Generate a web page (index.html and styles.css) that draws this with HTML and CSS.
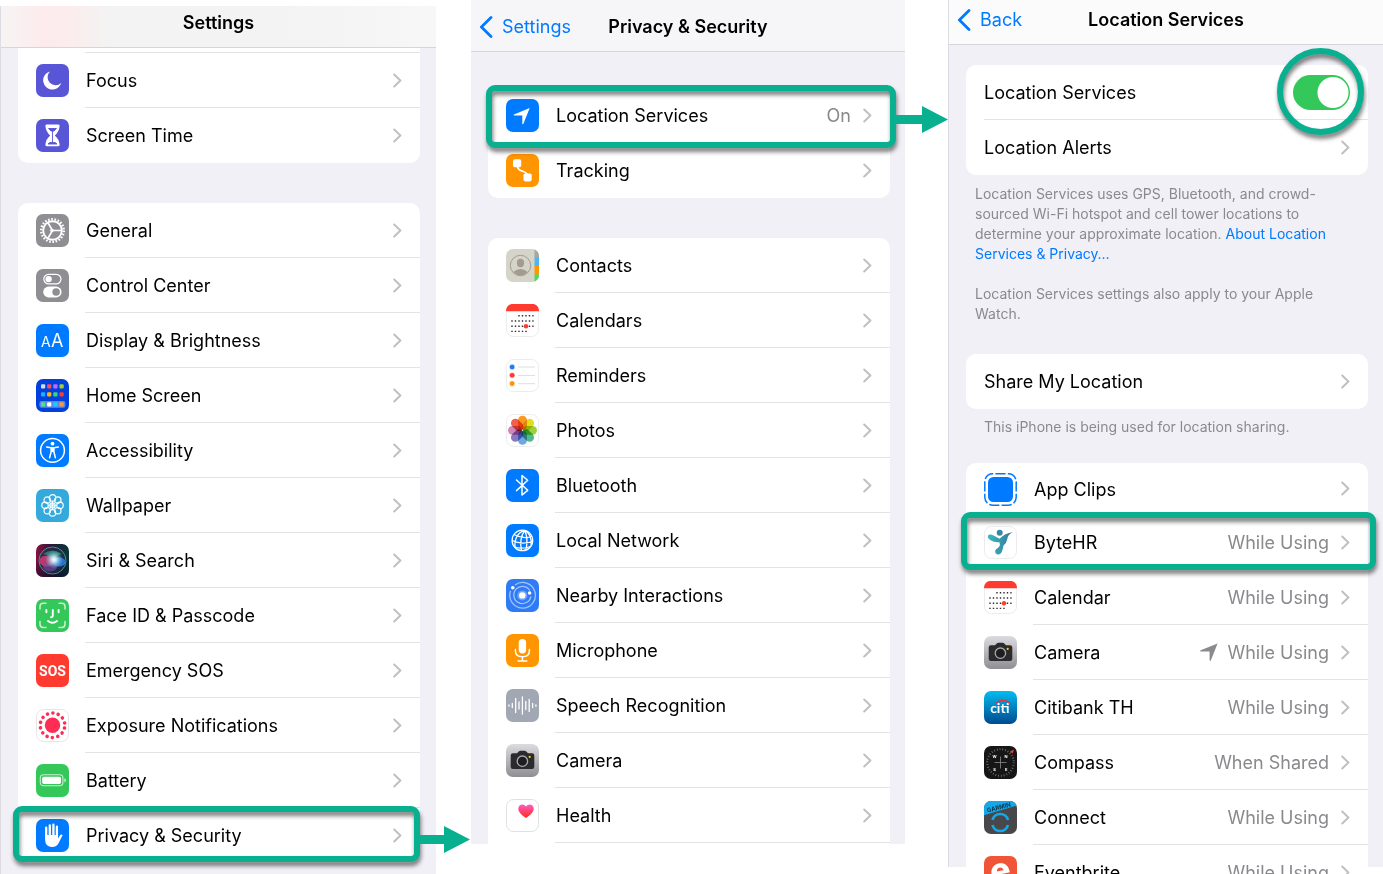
FILE: index.html
```html
<!DOCTYPE html>
<html lang="en">
<head>
<meta charset="utf-8">
<meta name="viewport" content="width=device-width, initial-scale=1">
<title>Location Services settings</title>
<link rel="stylesheet" href="styles.css">
</head>
<body>
<svg class="defs" aria-hidden="true">
  <defs>
    <linearGradient id="g-cam" x1="0" y1="0" x2="0" y2="1"><stop offset="0" stop-color="#dcdce0"/><stop offset="1" stop-color="#8e8e93"/></linearGradient>
    <linearGradient id="g-heart" x1="0" y1="0" x2="0" y2="1"><stop offset="0" stop-color="#ff5fc0"/><stop offset="1" stop-color="#ff2a1c"/></linearGradient>
    <linearGradient id="g-citi" x1="0" y1="0" x2="0" y2="1"><stop offset="0" stop-color="#00bdf2"/><stop offset="1" stop-color="#004a8f"/></linearGradient>
    <linearGradient id="g-siri" x1="0" y1="0" x2="1" y2="0"><stop offset="0" stop-color="#8a1140"/><stop offset=".45" stop-color="#2a1838"/><stop offset="1" stop-color="#06383a"/></linearGradient>
    <linearGradient id="g-siri2" x1="0" y1="0" x2="0" y2="1"><stop offset=".4" stop-color="#0a0c1c" stop-opacity="0"/><stop offset="1" stop-color="#0a0c2c" stop-opacity=".6"/></linearGradient>
    <radialGradient id="g-glow"><stop offset="0" stop-color="#fff"/><stop offset=".3" stop-color="#d8f4ff" stop-opacity=".85"/><stop offset="1" stop-color="#6fd0e0" stop-opacity="0"/></radialGradient>
    <linearGradient id="g-byte" x1="0" y1="0" x2="1" y2="0"><stop offset="0" stop-color="#35bcc0"/><stop offset="1" stop-color="#3b7498"/></linearGradient>
    <clipPath id="tile"><rect width="33" height="33" rx="7"/></clipPath>
  </defs>
  <symbol id="chevron" viewBox="0 0 9 15"><path d="M1.2 1.5 7.4 7.5 1.2 13.5" fill="none" stroke="#c0c0c3" stroke-width="2" stroke-linecap="round" stroke-linejoin="round"/></symbol>
  <symbol id="back" viewBox="0 0 14 22"><path d="M12 1.6 2.4 11 12 20.4" fill="none" stroke="#007aff" stroke-width="2.8" stroke-linecap="round" stroke-linejoin="round"/></symbol>
  <symbol id="arrow" viewBox="0 0 52 27"><path d="M0 9H26V0L52 13.5 26 27V18H0Z" fill="#08b090"/></symbol>
  <symbol id="calendar" viewBox="0 0 33 33">
    <rect x=".5" y=".5" width="32" height="32" rx="7" fill="#fff" stroke="#ececee"/>
    <path d="M0 7.3C0 2.6 2.6 0 7 0H26C30.4 0 33 2.6 33 7.3Z" fill="#ff3b30"/>
    <g stroke="#2c2c2e" stroke-width="1.4" stroke-dasharray="1.4 2.1"><path d="M12.3 11.8H27.6M5.3 17H27.6M5.3 22.2H27.6M5.3 27.4H21"/></g>
    <circle cx="20" cy="22.2" r="2.2" fill="#ff3b30"/>
  </symbol>
  <symbol id="camera" viewBox="0 0 33 33">
    <rect width="33" height="33" rx="7" fill="url(#g-cam)"/>
    <path d="M7 9.2H11L13 7.2Q13.6 6.7 14.3 6.7H18.7Q19.4 6.7 20 7.2L22 9.2H26Q28.3 9.2 28.3 11.5V22.8Q28.3 25.1 26 25.1H7Q4.7 25.1 4.7 22.8V11.5Q4.7 9.2 7 9.2Z" fill="#2b2b2d"/>
    <circle cx="16.4" cy="17.2" r="5.2" fill="#1e1e20" stroke="#aaaaae" stroke-width="1.3"/>
    <circle cx="23.7" cy="12.9" r="1.1" fill="#ffcc00"/>
  </symbol>
  <symbol id="location" viewBox="0 0 20 20"><path d="M18.6 1.4 11.8 18.4Q11.1 19.6 10.6 18.2V9.4H1.8Q.4 8.9 1.6 8.2Z"/></symbol>
</svg>

<main class="screens">
  <section class="screen screen-settings" aria-label="Settings">
    <header class="bar bar-settings"><h1>Settings</h1></header>
    <ul class="card card-cut">
      <li><a class="row row-cut" href="#focus">
        <svg class="icon" viewBox="0 0 33 33"><rect width="33" height="33" rx="7" fill="#5856d6"/><path d="M14 7.4A9.2 9.2 0 1 0 25.2 18.9 7.8 7.8 0 0 1 14 7.4Z" fill="#fff"/></svg>
        <span class="cell"><span class="label">Focus</span><svg class="chev"><use href="#chevron"/></svg></span></a></li>
      <li><a class="row" href="#screen-time">
        <svg class="icon" viewBox="0 0 33 33"><rect width="33" height="33" rx="7" fill="#5856d6"/><path d="M10.5 5.5H22.5Q23.8 5.5 23.6 7 23 13 18.8 16.5 23 20 23.6 25.5 23.8 27.3 22.5 27.3H10.5Q9.2 27.3 9.4 25.5 10 20 14.2 16.5 10 13 9.4 7 9.2 5.5 10.5 5.5Z" fill="#fff"/><path d="M12.5 9.5H20.5L18 12H15ZM16.5 12V23.5M12 25H21L19 23.5H14Z" fill="#5856d6" stroke="#5856d6" stroke-width=".9"/></svg>
        <span class="cell"><span class="label">Screen Time</span><svg class="chev"><use href="#chevron"/></svg></span></a></li>
    </ul>
    <ul class="card">
      <li><a class="row" href="#general">
        <svg class="icon" viewBox="0 0 33 33"><rect width="33" height="33" rx="7" fill="#8e8e93"/><g fill="none" stroke="#fff"><circle cx="16.5" cy="16.5" r="9.3" stroke-width="1.9"/><circle cx="16.5" cy="16.5" r="11.3" stroke-width="2.4" stroke-dasharray="1.65 1.577"/><path d="M16.5 16.5H25.5M16.5 16.5 11.8 8.5M16.5 16.5 11.8 24.5" stroke-width="1.6"/></g><circle cx="16" cy="16.5" r="1.8" fill="#fff"/></svg>
        <span class="cell"><span class="label">General</span><svg class="chev"><use href="#chevron"/></svg></span></a></li>
      <li><a class="row" href="#control-center">
        <svg class="icon" viewBox="0 0 33 33"><rect width="33" height="33" rx="7" fill="#8e8e93"/><rect x="7.8" y="5.3" width="17.2" height="9.6" rx="4.8" fill="none" stroke="#fff" stroke-width="1.2"/><circle cx="12.6" cy="10.1" r="3.2" fill="#fff"/><rect x="7.2" y="17.6" width="18.4" height="10.8" rx="5.4" fill="#fff"/><circle cx="20.1" cy="23" r="3.8" fill="#8e8e93"/></svg>
        <span class="cell"><span class="label">Control Center</span><svg class="chev"><use href="#chevron"/></svg></span></a></li>
      <li><a class="row" href="#display">
        <svg class="icon icon-text" viewBox="0 0 33 33"><rect width="33" height="33" rx="7" fill="#007aff"/><text x="5" y="23" font-size="14">A</text><text x="15" y="23" font-size="18">A</text></svg>
        <span class="cell"><span class="label">Display &amp; Brightness</span><svg class="chev"><use href="#chevron"/></svg></span></a></li>
      <li><a class="row" href="#home-screen">
        <svg class="icon" viewBox="0 0 33 33"><rect width="33" height="33" rx="7" fill="#0040dd"/><rect x="3.4" y="22" width="26" height="6.8" rx="2" fill="#5d86ea"/>
          <g><rect x="5" y="5.2" width="4.2" height="4.2" rx="1" fill="#d5dbe8"/><rect x="11.1" y="5.2" width="4.2" height="4.2" rx="1" fill="#ff4b64"/><rect x="17.3" y="5.2" width="4.2" height="4.2" rx="1" fill="#bf6bff"/><rect x="23.5" y="5.2" width="4.2" height="4.2" rx="1" fill="#a5cf35"/>
          <rect x="5" y="13.2" width="4.2" height="4.2" rx="1" fill="#17b1ff"/><rect x="11.1" y="13.2" width="4.2" height="4.2" rx="1" fill="#ffb700"/><rect x="17.3" y="13.2" width="4.2" height="4.2" rx="1" fill="#38d483"/><rect x="23.5" y="13.2" width="4.2" height="4.2" rx="1" fill="#ff3b30"/>
          <rect x="5" y="23.3" width="4.2" height="4.2" rx="1" fill="#4ee574"/><rect x="11.1" y="23.3" width="4.2" height="4.2" rx="1" fill="#fff"/><rect x="17.3" y="23.3" width="4.2" height="4.2" rx="1" fill="#22c9f7"/><rect x="23.5" y="23.3" width="4.2" height="4.2" rx="1" fill="#ff9a2e"/></g></svg>
        <span class="cell"><span class="label">Home Screen</span><svg class="chev"><use href="#chevron"/></svg></span></a></li>
      <li><a class="row" href="#accessibility">
        <svg class="icon" viewBox="0 0 33 33"><rect width="33" height="33" rx="7" fill="#007aff"/><circle cx="16.5" cy="16.4" r="11.9" fill="none" stroke="#fff" stroke-width="1.5"/><circle cx="16.5" cy="9.7" r="1.9" fill="#fff"/><path d="M10.6 12.9 15 13.7H18L22.4 12.9M15.2 14V17.5L13.6 23.8M17.8 14V17.5L19.4 23.8" fill="none" stroke="#fff" stroke-width="1.5" stroke-linecap="round" stroke-linejoin="round"/><path d="M14.8 13.5H18.2V18H14.8Z" fill="#fff"/></svg>
        <span class="cell"><span class="label">Accessibility</span><svg class="chev"><use href="#chevron"/></svg></span></a></li>
      <li><a class="row" href="#wallpaper">
        <svg class="icon" viewBox="0 0 33 33"><rect width="33" height="33" rx="7" fill="#34aadc"/><g fill="none" stroke="#fff" stroke-width="1.2"><circle cx="16.5" cy="16.4" r="2.6"/><circle cx="16.5" cy="8.9" r="3.2"/><circle cx="21.8" cy="11.1" r="3.2"/><circle cx="24" cy="16.4" r="3.2"/><circle cx="21.8" cy="21.7" r="3.2"/><circle cx="16.5" cy="23.9" r="3.2"/><circle cx="11.2" cy="21.7" r="3.2"/><circle cx="9" cy="16.4" r="3.2"/><circle cx="11.2" cy="11.1" r="3.2"/><path d="M16.5 12V21M12 16.4H21M13.3 13.2 19.7 19.6M19.7 13.2 13.3 19.6" stroke-width=".8"/></g></svg>
        <span class="cell"><span class="label">Wallpaper</span><svg class="chev"><use href="#chevron"/></svg></span></a></li>
      <li><a class="row" href="#siri">
        <svg class="icon" viewBox="0 0 33 33"><rect width="33" height="33" rx="7" fill="url(#g-siri)"/><rect width="33" height="33" rx="7" fill="url(#g-siri2)"/><circle cx="16.5" cy="16.5" r="13.5" fill="#24344e" fill-opacity=".5" stroke="#4f9c9a" stroke-width=".9"/><ellipse cx="10.5" cy="17" rx="7" ry="5.5" fill="#e0407e" fill-opacity=".75"/><ellipse cx="23" cy="18" rx="6.5" ry="4.5" fill="#2d7fe8" fill-opacity=".85"/><ellipse cx="14" cy="23" rx="7" ry="4.5" fill="#7d4fae" fill-opacity=".6"/><path d="M7 10Q16 3 26 10 20 11 17 16 12 10 7 10Z" fill="#2fae92" fill-opacity=".6"/><circle cx="18" cy="15.5" r="9" fill="url(#g-glow)"/></svg>
        <span class="cell"><span class="label">Siri &amp; Search</span><svg class="chev"><use href="#chevron"/></svg></span></a></li>
      <li><a class="row" href="#face-id">
        <svg class="icon" viewBox="0 0 33 33"><rect width="33" height="33" rx="7" fill="#34c759"/><g fill="none" stroke="#fff" stroke-linecap="round"><path d="M4 10V7.5Q4 4.3 7.2 4.3H10M23 4.3H25.8Q29 4.3 29 7.5V10M29 22.5V25.2Q29 28.4 25.8 28.4H23M10 28.4H7.2Q4 28.4 4 25.2V22.5" stroke-width="1.5" stroke-opacity=".75"/><path d="M10.4 11V13.2M22.6 11V13.2M16.8 11V16.5Q16.8 18.3 15 18.3M12 22Q16.5 25.7 21 22" stroke-width="1.9"/></g></svg>
        <span class="cell"><span class="label">Face ID &amp; Passcode</span><svg class="chev"><use href="#chevron"/></svg></span></a></li>
      <li><a class="row" href="#sos">
        <svg class="icon icon-text" viewBox="0 0 33 33"><rect width="33" height="33" rx="7" fill="#ff3b30"/><text class="sos" x="16.5" y="22" text-anchor="middle">SOS</text></svg>
        <span class="cell"><span class="label">Emergency SOS</span><svg class="chev"><use href="#chevron"/></svg></span></a></li>
      <li><a class="row" href="#exposure">
        <svg class="icon" viewBox="0 0 33 33"><rect x=".5" y=".5" width="32" height="32" rx="7" fill="#fff" stroke="#e6e6e8"/><circle cx="16.5" cy="16.3" r="7.7" fill="#ff2d55"/><circle cx="16.5" cy="16.3" r="12.3" fill="none" stroke="#ff2d55" stroke-width="3.6" stroke-linecap="round" stroke-dasharray=".01 5.51" transform="rotate(12.8 16.5 16.3)"/></svg>
        <span class="cell"><span class="label">Exposure Notifications</span><svg class="chev"><use href="#chevron"/></svg></span></a></li>
      <li><a class="row" href="#battery">
        <svg class="icon" viewBox="0 0 33 33"><rect width="33" height="33" rx="7" fill="#34c759"/><rect x="4.3" y="10.8" width="22.6" height="11" rx="3.2" fill="none" stroke="#c5f0d0" stroke-width="1.1"/><rect x="6.2" y="12.7" width="18.8" height="7.2" rx="1.6" fill="#fff"/><path d="M28.3 14.2Q29.9 14.9 29.9 16.3T28.3 18.4Z" fill="#c5f0d0"/></svg>
        <span class="cell"><span class="label">Battery</span><svg class="chev"><use href="#chevron"/></svg></span></a></li>
      <li><a class="row marked mark-privacy" href="#privacy">
        <svg class="icon" viewBox="0 0 33 33"><rect width="33" height="33" rx="7" fill="#007aff"/><g fill="none" stroke="#fff" stroke-linecap="round" stroke-width="2.3"><path d="M10.2 8.7V19M13.8 6.3V17M17.4 5.6V17M20.9 7.7V18"/></g><path d="M9.05 16H22.05V19.5L24.2 16Q25.4 14.8 26.7 16L22.8 23.7Q20.6 28 16.2 28 9.05 28 9.05 20Z" fill="#fff"/></svg>
        <span class="cell"><span class="label">Privacy &amp; Security</span><svg class="chev"><use href="#chevron"/></svg></span>
        <svg class="arrow"><use href="#arrow"/></svg></a></li>
    </ul>
  </section>

  <section class="screen screen-privacy" aria-label="Privacy and Security">
    <header class="bar bar-privacy"><button class="back" type="button"><svg><use href="#back"/></svg>Settings</button><h2>Privacy &amp; Security</h2></header>
    <ul class="card">
      <li><a class="row marked mark-location" href="#location">
        <svg class="icon" viewBox="0 0 33 33"><rect width="33" height="33" rx="7" fill="#007aff"/><use href="#location" x="6.5" y="7.8" width="18.5" height="18.5" fill="#fff"/></svg>
        <span class="cell"><span class="label">Location Services</span><span class="value">On</span><svg class="chev"><use href="#chevron"/></svg></span>
        <svg class="arrow"><use href="#arrow"/></svg></a></li>
      <li><a class="row" href="#tracking">
        <svg class="icon" viewBox="0 0 33 33"><rect width="33" height="33" rx="7" fill="#ff9500"/><rect x="7" y="5.2" width="8.2" height="8" rx="1.8" fill="#fff"/><rect x="17.5" y="19.4" width="8.2" height="8" rx="1.8" fill="#fff"/><path d="M11.6 12.5Q11.8 15.8 16 17T21.3 20.5" fill="none" stroke="#fff" stroke-width="1.7"/></svg>
        <span class="cell"><span class="label">Tracking</span><svg class="chev"><use href="#chevron"/></svg></span></a></li>
    </ul>
    <ul class="card card-open">
      <li><a class="row" href="#contacts">
        <svg class="icon" viewBox="0 0 33 33"><g clip-path="url(#tile)"><rect width="33" height="33" fill="#d5d4c8"/><rect x="28.5" width="4.5" height="9" fill="#a9a79f"/><rect x="28.5" y="8.5" width="4.5" height="8.5" fill="#4db5f0"/><rect x="28.5" y="16.8" width="4.5" height="9" fill="#ff9500"/><rect x="28.5" y="25.5" width="4.5" height="8" fill="#4cd964"/></g><circle cx="14.5" cy="16.5" r="10.2" fill="none" stroke="#a29b90" stroke-width="1"/><ellipse cx="14.5" cy="14" rx="3.6" ry="4.2" fill="#a29b90"/><path d="M7.3 23Q14.5 17 21.7 23 14.5 30 7.3 23Z" fill="#a29b90"/></svg>
        <span class="cell"><span class="label">Contacts</span><svg class="chev"><use href="#chevron"/></svg></span></a></li>
      <li><a class="row" href="#calendars"><svg class="icon"><use href="#calendar"/></svg>
        <span class="cell"><span class="label">Calendars</span><svg class="chev"><use href="#chevron"/></svg></span></a></li>
      <li><a class="row" href="#reminders">
        <svg class="icon" viewBox="0 0 33 33"><rect x=".5" y=".5" width="32" height="32" rx="7" fill="#fff" stroke="#ececee"/><path d="M12 8H29M12 16.4H29M12 24.7H29" stroke="#dededf" stroke-width="1"/><g stroke-width="1.2" stroke-opacity=".35"><circle cx="6.1" cy="8" r="2.3" fill="#1f7cf5" stroke="#1f7cf5"/><circle cx="6.1" cy="16.3" r="2.3" fill="#ff3b30" stroke="#ff3b30"/><circle cx="6.1" cy="24.6" r="2.3" fill="#ff9500" stroke="#ff9500"/></g></svg>
        <span class="cell"><span class="label">Reminders</span><svg class="chev"><use href="#chevron"/></svg></span></a></li>
      <li><a class="row" href="#photos">
        <svg class="icon" viewBox="0 0 33 33"><rect x=".5" y=".5" width="32" height="32" rx="7" fill="#fff" stroke="#ececee"/><g class="petals"><rect x="12.1" y="1.8" width="8.8" height="14" rx="4.4" fill="#f79a1e"/><rect x="12.1" y="1.8" width="8.8" height="14" rx="4.4" fill="#e6dc1c" transform="rotate(45 16.5 16.3)"/><rect x="12.1" y="1.8" width="8.8" height="14" rx="4.4" fill="#9fcf3c" transform="rotate(90 16.5 16.3)"/><rect x="12.1" y="1.8" width="8.8" height="14" rx="4.4" fill="#50b88e" transform="rotate(135 16.5 16.3)"/><rect x="12.1" y="1.8" width="8.8" height="14" rx="4.4" fill="#6fa8e0" transform="rotate(180 16.5 16.3)"/><rect x="12.1" y="1.8" width="8.8" height="14" rx="4.4" fill="#8a78bc" transform="rotate(225 16.5 16.3)"/><rect x="12.1" y="1.8" width="8.8" height="14" rx="4.4" fill="#cf88b8" transform="rotate(270 16.5 16.3)"/><rect x="12.1" y="1.8" width="8.8" height="14" rx="4.4" fill="#f0604c" transform="rotate(315 16.5 16.3)"/></g></svg>
        <span class="cell"><span class="label">Photos</span><svg class="chev"><use href="#chevron"/></svg></span></a></li>
      <li><a class="row" href="#bluetooth">
        <svg class="icon" viewBox="0 0 33 33"><rect width="33" height="33" rx="7" fill="#007aff"/><path d="M10.5 11 21.7 21.3 16 26V6.5L21.7 11.3 10.5 21.6" fill="none" stroke="#fff" stroke-width="1.5" stroke-linejoin="round" stroke-linecap="round"/></svg>
        <span class="cell"><span class="label">Bluetooth</span><svg class="chev"><use href="#chevron"/></svg></span></a></li>
      <li><a class="row" href="#network">
        <svg class="icon" viewBox="0 0 33 33"><rect width="33" height="33" rx="7" fill="#007aff"/><g fill="none" stroke="#fff" stroke-width="1.3"><circle cx="16.4" cy="16.4" r="10.3"/><path d="M18.6 6.4Q13 15 15.5 26.6M18.6 6.4Q22.5 14 20 26M18.6 6.4Q8 10 9 23.5M18.6 6.4Q26 10 25.2 21M8 10.5Q17 15.5 25.8 12.5M6.2 16.5Q15 21 26.7 17.5M8.5 23Q16 25.5 24.5 22.5"/></g></svg>
        <span class="cell"><span class="label">Local Network</span><svg class="chev"><use href="#chevron"/></svg></span></a></li>
      <li><a class="row" href="#nearby">
        <svg class="icon" viewBox="0 0 33 33"><rect width="33" height="33" rx="7" fill="#2f7bf6"/><g fill="none" stroke="#fff" stroke-width="1.3"><path d="M9 6A12.8 12.8 0 1 1 4.6 11.8" stroke-opacity=".55"/><path d="M23.8 11.5A8.6 8.6 0 1 0 24.9 17.3" stroke-opacity=".55"/></g><circle cx="16.3" cy="16.4" r="5" fill="#fff" fill-opacity=".3"/><circle cx="16.3" cy="16.4" r="3.2" fill="#fff"/><circle cx="6.8" cy="8.8" r="1.8" fill="#fff"/><circle cx="23.6" cy="14" r="1.8" fill="#fff"/></svg>
        <span class="cell"><span class="label">Nearby Interactions</span><svg class="chev"><use href="#chevron"/></svg></span></a></li>
      <li><a class="row" href="#microphone">
        <svg class="icon" viewBox="0 0 33 33"><rect width="33" height="33" rx="7" fill="#ff9500"/><rect x="12.7" y="5" width="7.4" height="14.5" rx="3.7" fill="#fff"/><path d="M9.4 15.5V16.5Q9.4 22.8 16.4 22.8T23.4 16.5V15.5M16.4 23V26.8M12 26.9H20.8" fill="none" stroke="#fff" stroke-width="1.5" stroke-linecap="round"/></svg>
        <span class="cell"><span class="label">Microphone</span><svg class="chev"><use href="#chevron"/></svg></span></a></li>
      <li><a class="row" href="#speech">
        <svg class="icon" viewBox="0 0 33 33"><rect width="33" height="33" rx="7" fill="#a1a7b3"/><path d="M3 15.8V17.2M6.3 14.5V18.5M9.7 9.5V23.5M13 13V20M16.4 8V25M19.8 12.5V20.5M23.2 10.5V22.5M26.6 14.5V18.5M29.9 15.8V17.2" stroke="#fff" stroke-width="1.3" stroke-linecap="round"/></svg>
        <span class="cell"><span class="label">Speech Recognition</span><svg class="chev"><use href="#chevron"/></svg></span></a></li>
      <li><a class="row" href="#camera-access"><svg class="icon"><use href="#camera"/></svg>
        <span class="cell"><span class="label">Camera</span><svg class="chev"><use href="#chevron"/></svg></span></a></li>
      <li><a class="row" href="#health">
        <svg class="icon" viewBox="0 0 33 33"><rect x=".5" y=".5" width="32" height="32" rx="7" fill="#fff" stroke="#e0e0e2"/><path d="M20 19C14 15 12.3 12.5 12.3 9.8 12.3 5.2 17.8 4 20 7.6 22.2 4 27.7 5.2 27.7 9.8 27.7 12.5 26 15 20 19Z" fill="url(#g-heart)"/></svg>
        <span class="cell"><span class="label">Health</span><svg class="chev"><use href="#chevron"/></svg></span></a></li>
    </ul>
  </section>

  <section class="screen screen-location" aria-label="Location Services">
    <header class="bar bar-location"><button class="back" type="button"><svg><use href="#back"/></svg>Back</button><h2>Location Services</h2></header>
    <ul class="card">
      <li class="row"><span class="cell"><label class="label" for="location-toggle">Location Services</label><span class="toggle"><input id="location-toggle" type="checkbox" role="switch" checked></span></span></li>
      <li><a class="row" href="#alerts"><span class="cell"><span class="label">Location Alerts</span><svg class="chev"><use href="#chevron"/></svg></span></a></li>
    </ul>
    <div class="note note-about">
      <p>Location Services uses GPS, Bluetooth, and crowd-sourced Wi-Fi hotspot and cell tower locations to determine your approximate location. <a href="#about">About Location Services &amp; Privacy…</a></p>
      <p>Location Services settings also apply to your Apple Watch.</p>
    </div>
    <ul class="card">
      <li><a class="row" href="#share"><span class="cell"><span class="label">Share My Location</span><svg class="chev"><use href="#chevron"/></svg></span></a></li>
    </ul>
    <p class="note note-share">This iPhone is being used for location sharing.</p>
    <ul class="card card-open">
      <li><a class="row row-short" href="#app-clips">
        <svg class="icon" viewBox="0 0 33 33"><rect x=".8" y=".8" width="31.4" height="31.4" rx="8" fill="none" stroke="#007aff" stroke-width="1.5" stroke-dasharray="10.2 2.2" stroke-dashoffset="-2.6"/><rect x="4" y="4" width="25" height="25" rx="5.5" fill="#007aff"/></svg>
        <span class="cell"><span class="label">App Clips</span><svg class="chev"><use href="#chevron"/></svg></span></a></li>
      <li><a class="row marked mark-byte" href="#bytehr">
        <svg class="icon" viewBox="0 0 33 33"><rect x=".5" y=".5" width="32" height="32" rx="7" fill="#fff" stroke="#ececee"/><circle cx="15.7" cy="6.7" r="3" fill="#3a86a6"/><path d="M4 9.5Q6 7.5 9.5 9.5L15.5 12.8Q21 7 28.6 6.3 24 8.5 23.3 13 22.5 17.5 19.5 19.5 19 23 17.5 26.5 15.5 29.500 12.5 28 10 26 12 23.3L15 21Q16.500 18.500 15.500 16.200 9 16.500 5 13 3 11 4 9.500Z" fill="url(#g-byte)"/></svg>
        <span class="cell"><span class="label">ByteHR</span><span class="value">While Using</span><svg class="chev"><use href="#chevron"/></svg></span></a></li>
      <li><a class="row" href="#calendar-app"><svg class="icon"><use href="#calendar"/></svg>
        <span class="cell"><span class="label">Calendar</span><span class="value">While Using</span><svg class="chev"><use href="#chevron"/></svg></span></a></li>
      <li><a class="row" href="#camera-app"><svg class="icon"><use href="#camera"/></svg>
        <span class="cell"><span class="label">Camera</span><svg class="recent" role="img" aria-label="Used recently"><use href="#location"/></svg><span class="value">While Using</span><svg class="chev"><use href="#chevron"/></svg></span></a></li>
      <li><a class="row" href="#citibank">
        <svg class="icon icon-text" viewBox="0 0 33 33"><rect width="33" height="33" rx="7" fill="url(#g-citi)"/><text class="citi" x="15.8" y="22" text-anchor="middle">citi</text><path d="M12.3 11.8Q18.8 6.5 25.3 11.8" fill="none" stroke="#e8323c" stroke-width="1.5"/></svg>
        <span class="cell"><span class="label">Citibank TH</span><span class="value">While Using</span><svg class="chev"><use href="#chevron"/></svg></span></a></li>
      <li><a class="row" href="#compass">
        <svg class="icon icon-text" viewBox="0 0 33 33"><rect width="33" height="33" rx="7" fill="#161617"/><circle cx="16.5" cy="16.5" r="13.3" fill="none" stroke="#77777a" stroke-width="2" stroke-dasharray=".8 1.989"/><path d="M16.5 10.5V22.5M10.5 16.5H22.5" stroke="#8a8a8d" stroke-width=".8"/><path d="M26 5.5 30 3.5 28.5 7.5Z" fill="#ff3b30"/><g class="points"><text x="8.5" y="12">W</text><text x="20.5" y="12">N</text><text x="9.2" y="24.5">S</text><text x="21" y="24.5">E</text></g></svg>
        <span class="cell"><span class="label">Compass</span><span class="value">When Shared</span><svg class="chev"><use href="#chevron"/></svg></span></a></li>
      <li><a class="row" href="#connect">
        <svg class="icon icon-text" viewBox="0 0 33 33"><g clip-path="url(#tile)"><rect width="33" height="33" fill="#48484b"/><path d="M0 0H33V4.5L0 14.2Z" fill="#12a8ea"/></g><text class="garmin" x="3.5" y="11.6" transform="rotate(-15 3.5 11.6)">GARMIN</text><path d="M8.5 19A8 8 0 0 1 24 19M24 24A8 8 0 0 1 8.5 24" fill="none" stroke="#12a8ea" stroke-width="2.7"/></svg>
        <span class="cell"><span class="label">Connect</span><span class="value">While Using</span><svg class="chev"><use href="#chevron"/></svg></span></a></li>
      <li><a class="row" href="#eventbrite">
        <svg class="icon icon-text" viewBox="0 0 33 33"><rect width="33" height="33" rx="7" fill="#f05537"/><text class="brite" x="16.5" y="26" text-anchor="middle" transform="rotate(-12 16.5 16.5)">e</text></svg>
        <span class="cell"><span class="label">Eventbrite</span><span class="value">While Using</span><svg class="chev"><use href="#chevron"/></svg></span></a></li>
    </ul>
  </section>
</main>
</body>
</html>
```
FILE: styles.css
```css
:root {
  --accent: #08b090;
  --blue: #007aff;
  --muted: #8a8a8e;
  --line: #e3e3e6;
  --panel: #f1f0f6;
}

* { box-sizing: border-box; }

body {
  margin: 0;
  height: 100vh;
  overflow: hidden;
  background: #fff;
  color: #000;
  font-family: Inter, "Liberation Sans", sans-serif;
  font-size: 18px;
  line-height: 24px;
}

.defs {
  position: absolute;
  width: 0;
  height: 0;
}

.screens {
  display: grid;
  grid-template-rows: minmax(0, 1fr);
  grid-template-columns: minmax(0, 436fr) minmax(0, 434fr) minmax(0, 435fr);
  column-gap: 39px;
  height: 100%;
}

.screen { background: var(--panel); }

.screen-settings {
  margin-top: 6px;
  border-left: 1px solid #dddce2;
}

.screen-privacy {
  align-self: start;
  margin-right: 4px;
  margin-left: -4px;
}

.screen-location {
  height: calc(100% - 7px);
  border-left: 1px solid #dddce2;
}

/* Title bars */
.bar {
  display: grid;
  grid-template-columns: 1fr auto 1fr;
  align-items: center;
  border-bottom: 1px solid #d6d6da;
}

.bar h1,
.bar h2 {
  grid-column: 2;
  margin: 0;
  font-size: 18px;
  font-weight: 600;
}

.bar-settings {
  height: 42px;
  padding-bottom: 8px;
  background: linear-gradient(90deg, #f7f4f4 0, #fdebec 10%, #fcecec 15%, #f3f3f3 25%, #f3f3f3 65%, #f7f7f7 100%);
}

.bar-privacy {
  height: 52px;
  padding-top: 2px;
  background: #f6f6f9;
}

.bar-location {
  height: 45px;
  padding-bottom: 4px;
  background: #fbfbfc;
}

.back {
  display: flex;
  align-items: center;
  gap: 9px;
  justify-self: start;
  padding: 0 0 0 8px;
  border: 0;
  background: none;
  color: var(--blue);
  font: inherit;
}

.back svg {
  width: 14px;
  height: 22px;
}

/* Lists */
.card {
  margin: 40px 16px 0 17px;
  padding: 0;
  border-radius: 10px;
  background: #fff;
  list-style: none;
}

.card-cut {
  margin-top: 0;
  padding-top: 4px;
  border-radius: 0 0 10px 10px;
}

.card-open {
  border-radius: 10px 10px 0 0;
  padding-bottom: 1px;
}

.screen-privacy .card,
.screen-location .card { margin-right: 15px; }
.bar-privacy + .card { margin-top: 36px; }
.bar-location + .card { margin-top: 20px; }

.row {
  position: relative;
  display: flex;
  align-items: center;
  gap: 16px;
  height: 55px;
  padding-left: 18px;
  color: inherit;
  text-decoration: none;
}

.row-short { height: 52px; }

.icon {
  flex: none;
  width: 33px;
  height: 33px;
}

.cell {
  display: flex;
  flex: 1;
  align-items: center;
  align-self: stretch;
  min-width: 0;
  padding-right: 18px;
  border-bottom: 1px solid var(--line);
}

.row-cut { height: 56px; }
.row-cut .cell { border-top: 1px solid var(--line); }
.card > li:last-child .cell { border-bottom-color: transparent; }
.card-open > li:last-child .cell { border-bottom-color: var(--line); }

.label,
.value {
  padding-top: 2px;
  white-space: nowrap;
}

.label { flex: 1; }

.icon + .cell .label { padding-left: 1px; }

.value {
  margin-right: 12px;
  color: var(--muted);
}

.chev {
  flex: none;
  width: 9px;
  height: 15px;
}

.recent {
  width: 20px;
  height: 20px;
  margin-right: 8px;
  fill: var(--muted);
}

.toggle {
  position: relative;
  display: flex;
}

.toggle input {
  width: 57px;
  height: 35px;
  margin: 0;
  border-radius: 18px;
  appearance: none;
  background: radial-gradient(circle at 40px 50%, #fff 15px, #34c759 16px);
}

/* Call-outs drawn over the screens */
.marked::after,
.toggle::after {
  content: "";
  position: absolute;
  z-index: 1;
  border: 6px solid var(--accent);
  border-radius: 9px;
  filter: drop-shadow(1px 4px 2px rgba(0, 0, 0, .5));
  pointer-events: none;
}

.mark-privacy::after { inset: -2px 0 1px -5px; }
.mark-location::after { inset: -3px -6px -5px -2px; }
.mark-byte::after { inset: -3px -8px 0 -5px; }

.toggle::after {
  inset: -27px -14px -25px -16px;
  border-radius: 50%;
}

.arrow {
  position: absolute;
  z-index: 2;
  top: 18px;
  left: 100%;
  width: 52px;
  height: 27px;
}

.mark-privacy .arrow { margin-left: -2px; }
.mark-location .arrow { margin-left: 6px; }

/* Footnotes */
.note {
  margin: 8px 28px 0 35px;
  color: var(--muted);
  font-size: 14px;
  line-height: 20px;
}

.note p { margin: 0 0 20px; }

.note-about {
  margin-top: 9px;
  margin-left: 26px;
}

.note-about + .card { margin-top: 30px; }
.note-share + .card { margin-top: 26px; }

.note a {
  color: var(--blue);
  text-decoration: none;
}

/* Lettering inside icons */
.icon-text text { fill: #fff; }

.sos {
  font-family: Roboto, sans-serif;
  font-size: 14px;
  font-weight: 700;
}

.citi {
  font-family: Lato, sans-serif;
  font-size: 14px;
  font-weight: 700;
}

.points {
  font-size: 4px;
  font-weight: 700;
}

.icon-text .garmin {
  fill: #123348;
  font-size: 6px;
  font-weight: 700;
}

.brite {
  font-size: 34px;
  font-weight: 800;
}

.petals rect { mix-blend-mode: multiply; }
```
